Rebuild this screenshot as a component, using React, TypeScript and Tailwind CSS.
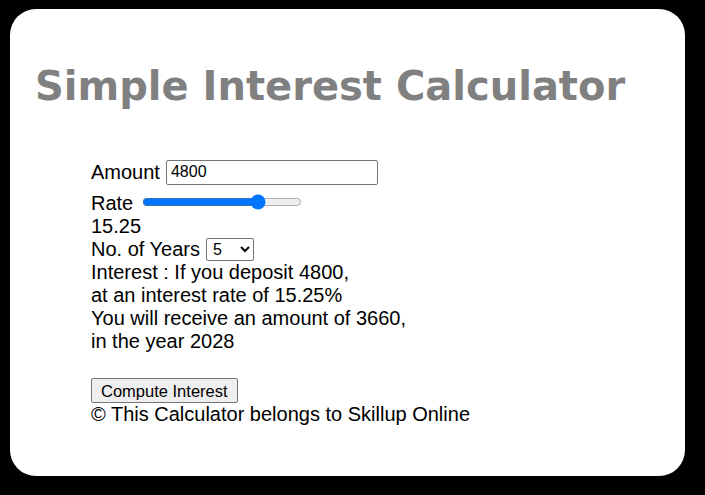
import { useState } from 'react';

export default function App() {
  const [amount, setAmount] = useState('4800');
  const [rate, setRate] = useState(15.25);
  const [years, setYears] = useState('5');

  return (
    <div className="w-[705px] h-[495px] bg-black pt-[9px] pl-[10px]">
      <div className="w-[675px] h-[467px] bg-white rounded-[26px] overflow-hidden">
        <h1 className="pl-[25px] pt-[54px] text-[40px] font-bold text-[#808080] font-['DejaVu_Sans',Verdana,sans-serif] leading-[46px]">
          Simple Interest Calculator
        </h1>
        <div className="pl-[81px] pt-[48px] text-[20px] leading-[23px] text-black font-['Liberation_Sans',Arial,sans-serif]">
          <div className="flex items-center h-[30px]">
            <span>Amount</span>
            <input
              type="number"
              value={amount}
              onChange={(e) => setAmount(e.target.value)}
              className="ml-[6px] w-[212px] h-[25px] border border-[#767676] rounded-[2px] px-[4px] text-[16px] font-['Liberation_Sans',Arial,sans-serif] outline-none [appearance:textfield]"
            />
          </div>
          <div className="flex items-end h-[28px]">
            <span>Rate</span>
            <input
              type="range"
              min={1}
              max={20}
              step={0.25}
              value={rate}
              onChange={(e) => setRate(Number(e.target.value))}
              className="ml-[9px] w-[160px] mb-[5px]"
            />
          </div>
          <div>{rate}</div>
          <div className="flex items-center h-[23px]">
            <span>No. of Years</span>
            <select
              value={years}
              onChange={(e) => setYears(e.target.value)}
              className="ml-[6px] w-[48px] h-[23px] border border-[#767676] rounded-[2px] text-[16px] font-['Liberation_Sans',Arial,sans-serif] px-[2px] bg-white"
            >
              {[1, 2, 3, 4, 5, 6, 7, 8, 9, 10].map((y) => (
                <option key={y} value={y}>
                  {y}
                </option>
              ))}
            </select>
          </div>
          <div>Interest : If you deposit 4800,</div>
          <div>at an interest rate of 15.25%</div>
          <div>You will receive an amount of 3660,</div>
          <div>in the year 2028</div>
          <div className="h-[22px]" />
          <div className="pt-[3px]">
            <button className="h-[25px] px-[9px] border border-[#767676] rounded-[2px] bg-[#efefef] text-[16.5px] leading-[20px] font-['Liberation_Sans',Arial,sans-serif]">
              Compute Interest
            </button>
          </div>
          <div>© This Calculator belongs to Skillup Online</div>
        </div>
      </div>
    </div>
  );
}
